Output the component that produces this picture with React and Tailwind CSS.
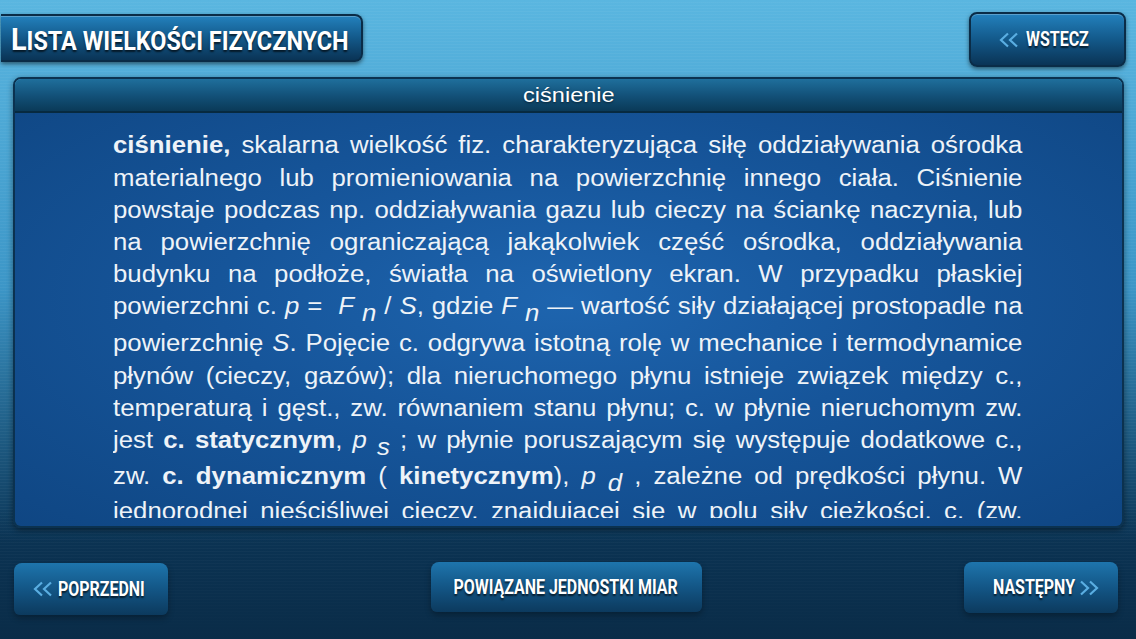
import React from 'react'

// Panel tekstu hasła z encyklopedii — każda linia osobno, wyjustowana
const lines = [
  { h: 'h-[33px]', content: <><b>ciśnienie,</b> skalarna wielkość fiz. charakteryzująca siłę oddziaływania ośrodka</> },
  { h: 'h-[32px]', content: <>materialnego lub promieniowania na powierzchnię innego ciała. Ciśnienie</> },
  { h: 'h-[32px]', content: <>powstaje podczas np. oddziaływania gazu lub cieczy na ściankę naczynia, lub</> },
  { h: 'h-[32px]', content: <>na powierzchnię ograniczającą jakąkolwiek część ośrodka, oddziaływania</> },
  { h: 'h-[32px]', content: <>budynku na podłoże, światła na oświetlony ekran. W przypadku płaskiej</> },
  {
    h: 'h-[37px]',
    content: (
      <>
        powierzchni c. <i>p</i> =&nbsp; <i>F</i> <Sub>n</Sub> / <i>S</i>, gdzie <i>F</i> <Sub>n</Sub> — wartość siły działającej prostopadle na
      </>
    ),
  },
  { h: 'h-[33px]', content: <>powierzchnię <i>S</i>. Pojęcie c. odgrywa istotną rolę w mechanice i termodynamice</> },
  { h: 'h-[32px]', content: <>płynów (cieczy, gazów); dla nieruchomego płynu istnieje związek między c.,</> },
  { h: 'h-[32px]', content: <>temperaturą i gęst., zw. równaniem stanu płynu; c. w płynie nieruchomym zw.</> },
  {
    h: 'h-[36px]',
    content: (
      <>
        jest <b>c. statycznym</b>, <i>p</i> <Sub>s</Sub> ; w płynie poruszającym się występuje dodatkowe c.,
      </>
    ),
  },
  {
    h: 'h-[35px]',
    content: (
      <>
        zw. <b>c. dynamicznym</b> ( <b>kinetycznym</b>), <i>p</i> <Sub>d</Sub> , zależne od prędkości płynu. W
      </>
    ),
  },
  { h: 'h-[32px]', content: <>jednorodnej nieściśliwej cieczy, znajdującej się w polu siły ciężkości, c. (zw.</> },
]

function Sub({ children }) {
  return <i className="relative top-[7px]">{children}</i>
}

function Chevrons({ flip }) {
  return (
    <svg width="22" height="16" viewBox="0 0 22 16" className={`shrink-0 ${flip ? 'scale-x-[-1]' : ''}`}>
      <path d="M10 1.5 L3 8 L10 14.5" fill="none" stroke="#5aaee2" strokeWidth="2.2" />
      <path d="M19 1.5 L12 8 L19 14.5" fill="none" stroke="#5aaee2" strokeWidth="2.2" />
    </svg>
  )
}

// wąski, pogrubiony napis na przyciskach
function Label({ children, className = '' }) {
  return (
    <span
      className={`inline-block whitespace-nowrap font-['Roboto',sans-serif] font-bold text-white leading-none [text-shadow:0_2px_2px_rgba(0,0,0,0.65)] ${className}`}
    >
      {children}
    </span>
  )
}

function TopButton({ className, children }) {
  return (
    <div
      className={`flex items-center rounded-lg border-2 border-[#0a2c47] bg-gradient-to-b from-[#2381bd] via-[#13598a] to-[#0a3456] shadow-[0_2px_4px_rgba(0,0,0,0.5),inset_0_1px_0_rgba(255,255,255,0.25)] ${className}`}
    >
      {children}
    </div>
  )
}

function BottomButton({ className, children }) {
  return (
    <div
      className={`flex items-center justify-center rounded-t-lg rounded-b-md bg-gradient-to-b from-[#1e75ad] via-[#135686] to-[#0c3a5e] shadow-[0_3px_6px_rgba(0,0,0,0.3)] ${className}`}
    >
      {children}
    </div>
  )
}

export default function App() {
  return (
    <div className="relative w-[1136px] h-[639px] overflow-hidden flex flex-col bg-gradient-to-b from-[#5ab6e0] via-[#3c96c7] via-45% to-[#0b3556] to-85% font-['Liberation_Sans',Arial,sans-serif]">
      {/* szczotkowany metal */}
      <div className="pointer-events-none absolute inset-0 bg-[repeating-linear-gradient(0deg,rgba(255,255,255,0.035)_0px,rgba(255,255,255,0.035)_1px,transparent_1px,transparent_3px)]" />
      <div className="pointer-events-none absolute inset-x-0 bottom-0 h-[130px] bg-gradient-to-b from-transparent to-[#0a2c48]" />

      {/* górny pasek */}
      <div className="relative flex justify-between items-start h-[77px]">
        <TopButton className="mt-[14px] ml-[1px] h-[48px] w-[362px] pl-[10px] pt-[2px] rounded-l-none border-l-0">
          <Label className="origin-left text-[26px] scale-x-[0.9]">
            <span className="text-[32px]">L</span>ISTA WIELKOŚCI FIZYCZNYCH
          </Label>
        </TopButton>
        <TopButton className="mt-[12px] mr-[10px] h-[55px] w-[157px] pl-[27px]">
          <Chevrons />
          <Label className="origin-left text-[21px] ml-[6px] scale-x-[0.76]">WSTECZ</Label>
        </TopButton>
      </div>

      {/* panel z treścią */}
      <div className="relative ml-[13px] mr-[12px] h-[451px] rounded-lg border-2 border-[#0b3250] overflow-hidden flex flex-col shadow-[0_2px_6px_rgba(0,0,0,0.45)]">
        <div className="h-[34px] shrink-0 flex items-center justify-center bg-gradient-to-b from-[#1f6f9c] via-[#13527a] to-[#0a3a58] border-b-2 border-[#072a40]">
          <span className="inline-block text-white text-[21px] scale-x-[1.12] [text-shadow:0_1px_2px_rgba(0,0,0,0.5)]">ciśnienie</span>
        </div>
        <div className="flex-1 bg-[radial-gradient(ellipse_at_50%_45%,#1e65af_0%,#16559a_45%,#0f4683_100%)] pt-[16px] pl-[98px]">
          <div className="h-[389px] overflow-hidden">
            <div className="w-[812px] origin-left scale-x-[1.12] text-[23px] text-[#eef3f8]">
              {lines.map((line, i) => (
                <div key={i} className={`${line.h} leading-[32px] text-justify [text-align-last:justify]`}>
                  {line.content}
                </div>
              ))}
            </div>
          </div>
        </div>
      </div>

      {/* dolne przyciski */}
      <div className="relative flex-1 flex justify-between items-start pt-[34px] pl-[14px] pr-[18px]">
        <BottomButton className="w-[154px] h-[52px] mt-[1px] justify-start pl-[18px]">
          <Chevrons />
          <Label className="origin-left text-[21px] ml-[4px] scale-x-[0.76]">POPRZEDNI</Label>
        </BottomButton>
        <BottomButton className="w-[271px] h-[50px]">
          <Label className="origin-center text-[21px] -mx-[40px] scale-x-[0.76]">POWIĄZANE JEDNOSTKI MIAR</Label>
        </BottomButton>
        <BottomButton className="relative w-[154px] h-[51px] justify-start pl-[29px]">
          <Label className="origin-left text-[21px] scale-x-[0.76]">NASTĘPNY</Label>
          <span className="absolute left-[114px] top-[18px]">
            <Chevrons flip />
          </span>
        </BottomButton>
      </div>
    </div>
  )
}
